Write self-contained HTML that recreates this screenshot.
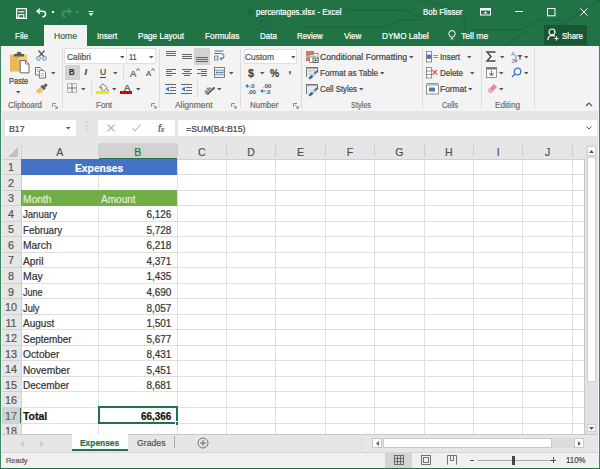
<!DOCTYPE html>
<html><head><meta charset="utf-8"><style>
html,body{margin:0;padding:0;}
body{width:600px;height:469px;position:relative;overflow:hidden;background:#f3f3f3;font-family:"Liberation Sans",sans-serif;}
.t{position:absolute;white-space:nowrap;line-height:1;transform-origin:0 0;-webkit-text-stroke:0.2px currentColor;}
.r{position:absolute;}
svg.r{overflow:visible;}
</style></head><body><div style="position:absolute;left:0;top:0;width:600px;height:469px;overflow:hidden">
<div class="r" style="left:0px;top:0px;width:600.00px;height:46.00px;background:#217346;"></div>
<svg class="r" style="left:0px;top:0px" width="600" height="46" viewBox="0 0 600 46"><g fill="none" stroke="#1c6a3f" stroke-width="1.5">
<circle cx="250.5" cy="11.7" r="2.2" fill="#1c6a3f"/>
<circle cx="263" cy="24" r="8"/>
<circle cx="263" cy="24" r="3.5"/>
<path d="M345 10 H400 Q410 10 416 16 H430"/>
<path d="M300 27 H380 Q392 27 398 20 H420"/>
<path d="M418 0 Q468 8 466 28 Q464 40 452 46"/>
<path d="M470 30 H520 L540 20 H560"/>
<path d="M505 46 L527 30"/>
<path d="M560 26 L600 0"/>
</g></svg>
<svg class="r" style="left:15.5px;top:7.5px" width="11" height="11" viewBox="0 0 11 11"><g fill="none" stroke="#fff"><rect x="0.65" y="0.65" width="9.7" height="9.7" stroke-width="1.3"/><path d="M2.3 3.8 h6" stroke-width="1.2"/><rect x="2.8" y="6.6" width="5" height="3.4" stroke-width="1.1"/></g></svg>
<svg class="r" style="left:35.5px;top:8px" width="11" height="10" viewBox="0 0 11 10"><g fill="none" stroke="#fff" stroke-width="1.5"><path d="M4 0.8 L1.1 3.3 L4 5.8"/><path d="M1.4 3.3 H6 Q9.6 3.3 9.6 6 Q9.6 8.6 6.3 8.9"/></g></svg>
<div class="r" style="left:51.8px;top:11px;width:1.80px;height:1.80px;background:#fff;"></div>
<svg class="r" style="left:61px;top:8px" width="11" height="10" viewBox="0 0 11 10"><g fill="none" stroke="#4f8f69" stroke-width="1.5"><path d="M7 0.8 L9.9 3.3 L7 5.8"/><path d="M9.6 3.3 H5 Q1.4 3.3 1.4 6 Q1.4 8.6 4.7 8.9"/></g></svg>
<div class="r" style="left:76px;top:11px;width:1.80px;height:1.80px;background:#4f8f69;"></div>
<svg class="r" style="left:88px;top:10.5px" width="6" height="6" viewBox="0 0 6 6"><rect x="0.5" y="0" width="5" height="1" fill="#fff"/><path d="M0.5 2.2 h5 l-2.5 2.8z" fill="#fff"/></svg>
<div class="t" style="left:256.40px;top:8.00px;font-size:8.5px;color:#fff;transform:scaleX(0.9292);">percentages.xlsx - Excel</div>
<div class="t" style="left:422.70px;top:8.00px;font-size:8.5px;color:#fff;transform:scaleX(0.9292);">Bob Flisser</div>
<svg class="r" style="left:479.8px;top:8px" width="11" height="8" viewBox="0 0 11 8"><g fill="none" stroke="#fff" stroke-width="1"><rect x="0.5" y="0.5" width="10" height="6.5"/></g><rect x="0.5" y="0.5" width="10" height="2" fill="#fff"/><path d="M3.5 5.5 L5.5 3.3 L7.5 5.5z" fill="#fff"/></svg>
<div class="r" style="left:514.6px;top:11px;width:8.70px;height:1.00px;background:#fff;"></div>
<svg class="r" style="left:547px;top:7.8px" width="9" height="9" viewBox="0 0 9 9"><rect x="0.5" y="0.5" width="7.5" height="7.3" fill="none" stroke="#fff" stroke-width="1"/></svg>
<svg class="r" style="left:579.8px;top:8px" width="8" height="8" viewBox="0 0 8 8"><path d="M0.3 0.3 L7.5 7.5 M7.5 0.3 L0.3 7.5" stroke="#fff" stroke-width="1"/></svg>
<div class="r" style="left:44px;top:25px;width:43.00px;height:21.00px;background:#f3f3f3;"></div>
<div class="t" style="left:15.00px;top:32.00px;font-size:8.5px;color:#fff;transform:scaleX(0.9492);">File</div>
<div class="t" style="left:54.00px;top:32.00px;font-size:8.5px;color:#3a6b50;transform:scaleX(1.0144);">Home</div>
<div class="t" style="left:97.30px;top:32.00px;font-size:8.5px;color:#fff;transform:scaleX(0.9550);">Insert</div>
<div class="t" style="left:138.00px;top:32.00px;font-size:8.5px;color:#fff;transform:scaleX(0.9638);">Page Layout</div>
<div class="t" style="left:204.90px;top:32.00px;font-size:8.5px;color:#fff;transform:scaleX(0.9712);">Formulas</div>
<div class="t" style="left:259.90px;top:32.00px;font-size:8.5px;color:#fff;transform:scaleX(0.9357);">Data</div>
<div class="t" style="left:297.20px;top:32.00px;font-size:8.5px;color:#fff;transform:scaleX(0.9222);">Review</div>
<div class="t" style="left:343.70px;top:32.00px;font-size:8.5px;color:#fff;transform:scaleX(0.9469);">View</div>
<div class="t" style="left:381.50px;top:32.00px;font-size:8.5px;color:#fff;transform:scaleX(0.9618);">DYMO Label</div>
<svg class="r" style="left:448px;top:30px" width="8" height="11" viewBox="0 0 8 11"><g fill="none" stroke="#fff" stroke-width="1"><path d="M2.5 7 Q0.5 5 0.8 3.2 Q1.2 0.6 4 0.6 Q6.8 0.6 7.2 3.2 Q7.5 5 5.5 7 Z"/><path d="M2.6 8.8 h2.8"/></g></svg>
<div class="t" style="left:461.00px;top:32.00px;font-size:8.5px;color:#fff;transform:scaleX(1.0140);">Tell me</div>
<div class="r" style="left:544px;top:25px;width:43.30px;height:19.50px;background:#185634;"></div>
<svg class="r" style="left:547px;top:28px" width="12" height="13" viewBox="0 0 12 13"><g fill="none" stroke="#fff" stroke-width="1.2"><circle cx="5" cy="4" r="3"/><path d="M0.8 12 Q1.2 7.5 5 7.3 Q7 7.3 8 8.3"/><path d="M9.5 8.5 v4 M7.5 10.5 h4"/></g></svg>
<div class="t" style="left:561.70px;top:32.00px;font-size:8.5px;color:#fff;transform:scaleX(0.9259);">Share</div>
<div class="r" style="left:1.5px;top:46px;width:596.50px;height:64.50px;background:#f3f3f3;"></div>
<div class="r" style="left:0px;top:46px;width:1.20px;height:423.00px;background:#3d8560;"></div>
<div class="r" style="left:598.6px;top:46px;width:1.40px;height:423.00px;background:#3d8560;"></div>
<div class="r" style="left:62px;top:49px;width:1.00px;height:59.00px;background:#dcdcdc;"></div>
<div class="r" style="left:159.2px;top:49px;width:1.00px;height:59.00px;background:#dcdcdc;"></div>
<div class="r" style="left:240.4px;top:49px;width:1.00px;height:59.00px;background:#dcdcdc;"></div>
<div class="r" style="left:301.4px;top:49px;width:1.00px;height:59.00px;background:#dcdcdc;"></div>
<div class="r" style="left:422px;top:49px;width:1.00px;height:59.00px;background:#dcdcdc;"></div>
<div class="r" style="left:480.6px;top:49px;width:1.00px;height:59.00px;background:#dcdcdc;"></div>
<div class="r" style="left:533.8px;top:49px;width:1.00px;height:59.00px;background:#dcdcdc;"></div>
<div class="t" style="left:7.50px;top:101.37px;font-size:8.3px;color:#6e6e6e;transform:scaleX(0.9571);">Clipboard</div>
<div class="t" style="left:96.20px;top:101.37px;font-size:8.3px;color:#6e6e6e;transform:scaleX(0.9695);">Font</div>
<div class="t" style="left:175.20px;top:101.37px;font-size:8.3px;color:#6e6e6e;transform:scaleX(1.0161);">Alignment</div>
<div class="t" style="left:250.20px;top:101.37px;font-size:8.3px;color:#6e6e6e;transform:scaleX(0.9621);">Number</div>
<div class="t" style="left:351.00px;top:101.37px;font-size:8.3px;color:#6e6e6e;transform:scaleX(0.8849);">Styles</div>
<div class="t" style="left:442.00px;top:101.37px;font-size:8.3px;color:#6e6e6e;transform:scaleX(0.8673);">Cells</div>
<div class="t" style="left:495.00px;top:101.37px;font-size:8.3px;color:#6e6e6e;transform:scaleX(0.9851);">Editing</div>
<svg class="r" style="left:52px;top:103px" width="6" height="6" viewBox="0 0 6 6"><g fill="none" stroke="#777" stroke-width="0.8"><path d="M0.5 4 V0.5 H4"/><path d="M2 2 L5.2 5.2"/></g><path d="M5.6 2.8 V5.6 H2.8z" fill="#777"/></svg>
<svg class="r" style="left:151px;top:103px" width="6" height="6" viewBox="0 0 6 6"><g fill="none" stroke="#777" stroke-width="0.8"><path d="M0.5 4 V0.5 H4"/><path d="M2 2 L5.2 5.2"/></g><path d="M5.6 2.8 V5.6 H2.8z" fill="#777"/></svg>
<svg class="r" style="left:231.2px;top:103px" width="6" height="6" viewBox="0 0 6 6"><g fill="none" stroke="#777" stroke-width="0.8"><path d="M0.5 4 V0.5 H4"/><path d="M2 2 L5.2 5.2"/></g><path d="M5.6 2.8 V5.6 H2.8z" fill="#777"/></svg>
<svg class="r" style="left:292.6px;top:103px" width="6" height="6" viewBox="0 0 6 6"><g fill="none" stroke="#777" stroke-width="0.8"><path d="M0.5 4 V0.5 H4"/><path d="M2 2 L5.2 5.2"/></g><path d="M5.6 2.8 V5.6 H2.8z" fill="#777"/></svg>
<svg class="r" style="left:585px;top:101px" width="8" height="6" viewBox="0 0 8 6"><path d="M1 5 L4 2 L7 5" fill="none" stroke="#555" stroke-width="1.2"/></svg>
<svg class="r" style="left:9px;top:51px" width="22" height="23" viewBox="0 0 22 23"><rect x="1" y="3.5" width="17" height="17" fill="#eab956"/>
<rect x="10" y="3.5" width="8" height="6" fill="#f3cf80"/>
<path d="M5 5.5 v-2.5 h2.5 a2.5 2.2 0 0 1 5 0 h2.5 v2.5 z" fill="#5a5a5a"/>
<path d="M11.2 9.5 h5.3 l3.5 3.5 v8.8 h-8.8z" fill="#fff" stroke="#6a6a6a" stroke-width="1"/>
<path d="M16.5 9.5 v3.5 h3.5" fill="none" stroke="#6a6a6a" stroke-width="0.8"/></svg>
<div class="t" style="left:8.80px;top:76.80px;font-size:8.5px;color:#444;transform:scaleX(0.8834);">Paste</div>
<svg class="r" style="left:16px;top:90.8px" width="5" height="3" viewBox="0 0 5 3"><path d="M0 0 h4.5 l-2.25 2.5z" fill="#555"/></svg>
<svg class="r" style="left:35.5px;top:50px" width="11" height="11" viewBox="0 0 11 11"><g fill="none" stroke="#555" stroke-width="1.2"><path d="M2.5 0.5 L7.8 6.5 M8.5 0.5 L3.2 6.5"/></g><g fill="#dbe8f6" stroke="#5b8fc9" stroke-width="1"><circle cx="2.5" cy="8.3" r="1.9"/><circle cx="8.5" cy="8.3" r="1.9"/></g></svg>
<svg class="r" style="left:35px;top:66.5px" width="11" height="11.5" viewBox="0 0 11 11.5"><g fill="#fff" stroke="#666" stroke-width="0.9"><path d="M0.5 0.5 h4.5 l1.8 1.8 v5.7 h-6.3z"/><path d="M4.3 3.5 h4.3 l1.9 1.9 v5.6 h-6.2z"/></g><path d="M1.8 2.5 h2 M1.8 4.5 h2 M5.6 6.5 h3.3 M5.6 8.5 h3.3" stroke="#999" stroke-width="0.7"/></svg>
<svg class="r" style="left:50.5px;top:71.8px" width="5" height="3" viewBox="0 0 5 3"><path d="M0 0 h4.5 l-2.25 2.5z" fill="#555"/></svg>
<svg class="r" style="left:35.5px;top:83px" width="12" height="10.5" viewBox="0 0 12 10.5"><path d="M0.5 7.5 L4.5 3.5 L8 7 L4 10.5 Q2 10.5 0.5 9z" fill="#edc36a"/><path d="M4.5 3.5 L6.5 1.8 L9.8 5.2 L8 7z" fill="#555"/><path d="M7.5 2.5 L9.8 0.3 L11.6 2.2 L9.3 4.5z" fill="#555"/></svg>
<div class="r" style="left:64.3px;top:48.3px;width:92.20px;height:15.70px;background:#fff;box-shadow: inset 0 0 0 1px #e0e0e0;"></div>
<div class="r" style="left:126px;top:48.3px;width:1.00px;height:15.70px;background:#e0e0e0;"></div>
<div class="t" style="left:66.70px;top:53.10px;font-size:8.5px;color:#505050;transform:scaleX(0.9963);">Calibri</div>
<svg class="r" style="left:119.5px;top:55.5px" width="5" height="3" viewBox="0 0 5 3"><path d="M0 0 h4.5 l-2.25 2.5z" fill="#555"/></svg>
<div class="t" style="left:128.80px;top:53.10px;font-size:8.5px;color:#505050;transform:scaleX(0.8841);">11</div>
<svg class="r" style="left:149.2px;top:55.5px" width="5" height="3" viewBox="0 0 5 3"><path d="M0 0 h4.5 l-2.25 2.5z" fill="#555"/></svg>
<div class="r" style="left:64.5px;top:64.5px;width:15.00px;height:15.80px;background:#d2d2d2;"></div>
<div class="t" style="left:69.00px;top:68.40px;font-size:8.5px;color:#333;font-weight:bold;transform:scaleX(0.9123);">B</div>
<div class="t" style="left:84.50px;top:67.98px;font-size:9px;color:#444;font-weight:bold;font-style:italic;font-family:"Liberation Serif",serif;">I</div>
<div class="t" style="left:99.60px;top:68.00px;font-size:8.5px;color:#444;transform:scaleX(1.0100);">U</div>
<div class="r" style="left:99.6px;top:76.6px;width:6.40px;height:0.90px;background:#444;"></div>
<svg class="r" style="left:113px;top:72px" width="5" height="3" viewBox="0 0 5 3"><path d="M0 0 h4.5 l-2.25 2.5z" fill="#555"/></svg>
<div class="r" style="left:122.6px;top:65px;width:0.80px;height:15.00px;background:#dcdcdc;"></div>
<div class="t" style="left:129.60px;top:68.56px;font-size:9.5px;color:#555;transform:scaleX(1.0100);">A</div>
<svg class="r" style="left:135.8px;top:67.8px" width="4" height="3" viewBox="0 0 4 3"><path d="M0.3 2.7 L2 0.6 L3.7 2.7" fill="none" stroke="#555" stroke-width="0.9"/></svg>
<div class="t" style="left:146.40px;top:69.83px;font-size:8px;color:#555;transform:scaleX(0.9745);">A</div>
<svg class="r" style="left:151.2px;top:67.6px" width="4" height="3" viewBox="0 0 4 3"><path d="M0.3 2.7 L2 0.6 L3.7 2.7" fill="none" stroke="#555" stroke-width="0.9"/></svg>
<svg class="r" style="left:66.5px;top:83.2px" width="10.5" height="10" viewBox="0 0 10.5 10"><g fill="none" stroke="#8a8a8a" stroke-width="0.9" stroke-dasharray="1.2 0.6"><rect x="0.5" y="0.5" width="9" height="9"/></g><path d="M5 0.5 v9 M0.5 5 h9" stroke="#777" stroke-width="1"/></svg>
<svg class="r" style="left:81.3px;top:87.5px" width="5" height="3" viewBox="0 0 5 3"><path d="M0 0 h4.5 l-2.25 2.5z" fill="#555"/></svg>
<div class="r" style="left:91.1px;top:80.5px;width:0.80px;height:14.50px;background:#dcdcdc;"></div>
<svg class="r" style="left:97px;top:82.5px" width="13" height="9" viewBox="0 0 13 9"><path d="M2.5 4 L6 0.8 L10.2 4.8 L6.4 8.2 Z" fill="#fff" stroke="#666" stroke-width="0.9"/><path d="M3 3.5 L6 5.6" stroke="#666" stroke-width="0.8"/><path d="M10.5 5.5 Q12.5 7.5 11.2 8.5 Q10 8.5 10.2 7z" fill="#4a87c8"/></svg>
<div class="r" style="left:96.3px;top:91px;width:13.10px;height:3.00px;background:#f0e800;"></div>
<svg class="r" style="left:112px;top:87.5px" width="5" height="3" viewBox="0 0 5 3"><path d="M0 0 h4.5 l-2.25 2.5z" fill="#555"/></svg>
<div class="t" style="left:123.60px;top:83.26px;font-size:9.5px;color:#444;transform:scaleX(0.9942);">A</div>
<div class="r" style="left:120.2px;top:91.3px;width:12.10px;height:2.70px;background:#e00000;"></div>
<svg class="r" style="left:136px;top:87.5px" width="5" height="3" viewBox="0 0 5 3"><path d="M0 0 h4.5 l-2.25 2.5z" fill="#555"/></svg>
<div class="r" style="left:166px;top:51px;width:10.00px;height:1.00px;background:#666;"></div>
<div class="r" style="left:166px;top:53px;width:10.00px;height:1.00px;background:#666;"></div>
<div class="r" style="left:166px;top:55px;width:10.00px;height:1.00px;background:#666;"></div>
<div class="r" style="left:182px;top:54px;width:10.00px;height:1.00px;background:#666;"></div>
<div class="r" style="left:182px;top:56px;width:10.00px;height:1.00px;background:#666;"></div>
<div class="r" style="left:182px;top:58px;width:10.00px;height:1.00px;background:#666;"></div>
<div class="r" style="left:194.3px;top:48.2px;width:15.40px;height:16.50px;background:#d2d2d2;"></div>
<div class="r" style="left:196px;top:57px;width:12.00px;height:1.00px;background:#666;"></div>
<div class="r" style="left:196px;top:59px;width:12.00px;height:1.00px;background:#666;"></div>
<div class="r" style="left:196px;top:61px;width:12.00px;height:1.00px;background:#666;"></div>
<svg class="r" style="left:213.5px;top:50px" width="11" height="11" viewBox="0 0 11 11"><path d="M0.5 1 h9 M0.5 3.5 h6" stroke="#6a6a6a" stroke-width="1"/><path d="M6.5 3.5 q3.5 0 3.5 2.8 q0 2.5 -3 2.5" fill="none" stroke="#3f7fc4" stroke-width="1.1"/><path d="M5.5 8.8 l2.2 -2 v4z" fill="#3f7fc4"/><rect x="0.5" y="6" width="3.5" height="4" fill="#d8e6f5" stroke="#777" stroke-width="0.8"/></svg>
<div class="r" style="left:166px;top:69px;width:10.00px;height:1.00px;background:#666;"></div>
<div class="r" style="left:182.0px;top:69px;width:10.00px;height:1.00px;background:#666;"></div>
<div class="r" style="left:197px;top:69px;width:10.00px;height:1.00px;background:#666;"></div>
<div class="r" style="left:166px;top:71px;width:6.00px;height:1.00px;background:#666;"></div>
<div class="r" style="left:184.0px;top:71px;width:6.00px;height:1.00px;background:#666;"></div>
<div class="r" style="left:201px;top:71px;width:6.00px;height:1.00px;background:#666;"></div>
<div class="r" style="left:166px;top:73px;width:10.00px;height:1.00px;background:#666;"></div>
<div class="r" style="left:182.0px;top:73px;width:10.00px;height:1.00px;background:#666;"></div>
<div class="r" style="left:197px;top:73px;width:10.00px;height:1.00px;background:#666;"></div>
<div class="r" style="left:166px;top:75px;width:6.00px;height:1.00px;background:#666;"></div>
<div class="r" style="left:184.0px;top:75px;width:6.00px;height:1.00px;background:#666;"></div>
<div class="r" style="left:201px;top:75px;width:6.00px;height:1.00px;background:#666;"></div>
<svg class="r" style="left:213.8px;top:67px" width="11" height="11" viewBox="0 0 11 11"><g fill="none" stroke="#777" stroke-width="0.9"><rect x="0.5" y="0.5" width="10" height="10"/><path d="M0.5 3.3 h10 M0.5 7.7 h10"/></g><rect x="1" y="3.8" width="9" height="3.4" fill="#dce9f5"/><path d="M2 5.5 h7" stroke="#3f7fc4" stroke-width="0.9"/><path d="M1.5 5.5 l1.5 -1.3 v2.6z M9.5 5.5 l-1.5 -1.3 v2.6z" fill="#3f7fc4"/></svg>
<svg class="r" style="left:229.2px;top:71.5px" width="5" height="3" viewBox="0 0 5 3"><path d="M0 0 h4.5 l-2.25 2.5z" fill="#555"/></svg>
<svg class="r" style="left:164.7px;top:83.5px" width="12" height="10" viewBox="0 0 12 10"><g fill="#666"><rect x="0" y="0" width="11" height="1"/><rect x="5" y="3" width="6" height="1"/><rect x="5" y="6" width="6" height="1"/><rect x="0" y="9" width="11" height="1"/></g><path d="M0.5 5 L4 2.5 V7.5z" fill="#3a7cc7"/></svg>
<svg class="r" style="left:180.5px;top:83.5px" width="12" height="10" viewBox="0 0 12 10"><g fill="#666"><rect x="0" y="0" width="11" height="1"/><rect x="5" y="3" width="6" height="1"/><rect x="5" y="6" width="6" height="1"/><rect x="0" y="9" width="11" height="1"/></g><path d="M0.5 5 L4 2.5 V7.5z" fill="#3a7cc7"/></svg>
<div class="r" style="left:197px;top:81px;width:0.80px;height:16.00px;background:#dcdcdc;"></div>
<svg class="r" style="left:202.5px;top:83.5px" width="12" height="11" viewBox="0 0 12 11"><g transform="rotate(-40 5 6)"><text x="0.5" y="8.5" font-size="7" font-weight="bold" font-family="Liberation Sans" fill="#555">ab</text></g><path d="M4.5 10.5 L11.5 3.5" stroke="#555" stroke-width="1.2"/><path d="M11.8 3.2 l-3 0.6 l2.4 2.4z" fill="#555"/></svg>
<svg class="r" style="left:216.7px;top:88px" width="5" height="3" viewBox="0 0 5 3"><path d="M0 0 h4.5 l-2.25 2.5z" fill="#555"/></svg>
<div class="r" style="left:243.7px;top:48.5px;width:53.30px;height:15.60px;background:#fff;box-shadow: inset 0 0 0 1px #e0e0e0;"></div>
<div class="t" style="left:245.20px;top:53.30px;font-size:8.5px;color:#505050;transform:scaleX(0.9869);">Custom</div>
<svg class="r" style="left:290.5px;top:55.5px" width="5" height="3" viewBox="0 0 5 3"><path d="M0 0 h4.5 l-2.25 2.5z" fill="#555"/></svg>
<div class="t" style="left:248.00px;top:68.31px;font-size:10.5px;color:#444;font-weight:bold;transform:scaleX(1.0276);">$</div>
<svg class="r" style="left:260.2px;top:72px" width="5" height="3" viewBox="0 0 5 3"><path d="M0 0 h4.5 l-2.25 2.5z" fill="#555"/></svg>
<div class="t" style="left:270.40px;top:68.73px;font-size:10px;color:#444;font-weight:bold;transform:scaleX(1.0346);">%</div>
<div class="t" style="left:288.60px;top:64.53px;font-size:10px;color:#444;font-weight:bold;">,</div>
<svg class="r" style="left:244.5px;top:83px" width="12" height="11" viewBox="0 0 12 11"><text x="4.5" y="5" font-size="6" font-weight="bold" font-family="Liberation Sans" fill="#555">.0</text><text x="2.5" y="10.5" font-size="6" font-weight="bold" font-family="Liberation Sans" fill="#555">.00</text><path d="M0 3 L3 1 V5z" fill="#3a7cc7"/><rect x="2" y="2.6" width="3" height="0.9" fill="#3a7cc7"/></svg>
<svg class="r" style="left:260px;top:83px" width="12" height="11" viewBox="0 0 12 11"><text x="3" y="5" font-size="6" font-weight="bold" font-family="Liberation Sans" fill="#555">.00</text><text x="5.5" y="10.5" font-size="6" font-weight="bold" font-family="Liberation Sans" fill="#555">.0</text><path d="M0 8 L3 6 V10z" fill="#3a7cc7"/><rect x="2" y="7.6" width="4" height="0.9" fill="#3a7cc7"/></svg>
<svg class="r" style="left:306px;top:51px" width="13" height="12" viewBox="0 0 13 12"><rect x="3.5" y="2.5" width="8.5" height="9" fill="#fff" stroke="#8a8a8a" stroke-width="0.9"/><rect x="0" y="0" width="8" height="4" fill="#cf7a5a"/><rect x="0" y="0" width="4" height="10" fill="#cf7a5a"/><rect x="0" y="4.5" width="10" height="2" fill="#aab6c6"/><rect x="7" y="7" width="5" height="4.5" fill="#fff" stroke="#555" stroke-width="0.9"/><rect x="8.5" y="8.5" width="2" height="1.8" fill="#333"/></svg>
<svg class="r" style="left:306px;top:67px" width="13" height="12" viewBox="0 0 13 12"><path d="M0.5 10 V0.5 H11.5 V6" fill="none" stroke="#777" stroke-width="1"/><rect x="0.5" y="0" width="11" height="1.6" fill="#777"/><path d="M0.5 4 h11 M0.5 7 h8 M4.2 1 v9 M8 1 v6" stroke="#b5b5b5" stroke-width="0.7"/><path d="M4 11 L11.8 4" stroke="#b9d3ee" stroke-width="3.2"/><path d="M3.2 11.8 L6.5 8.8" stroke="#2f5f9a" stroke-width="2.2"/><path d="M8.5 6.5 L12 3.5" stroke="#555" stroke-width="1.5"/></svg>
<svg class="r" style="left:306px;top:83.5px" width="13" height="12" viewBox="0 0 13 12"><path d="M0.5 10 V0.5 H11.5 V6" fill="none" stroke="#777" stroke-width="1"/><rect x="0.5" y="0" width="11" height="1.6" fill="#777"/><rect x="1.5" y="2" width="9.5" height="7" fill="#e6e9ee"/><path d="M4 11 L11.8 4" stroke="#b9d3ee" stroke-width="3.2"/><path d="M3.2 11.8 L6.5 8.8" stroke="#2f5f9a" stroke-width="2.2"/><path d="M8.5 6.5 L12 3.5" stroke="#555" stroke-width="1.5"/></svg>
<div class="t" style="left:320.00px;top:53.30px;font-size:8.5px;color:#444;transform:scaleX(1.0174);">Conditional Formatting</div>
<svg class="r" style="left:408.6px;top:56px" width="5" height="3" viewBox="0 0 5 3"><path d="M0 0 h4.5 l-2.25 2.5z" fill="#555"/></svg>
<div class="t" style="left:320.00px;top:69.30px;font-size:8.5px;color:#444;transform:scaleX(0.9542);">Format as Table</div>
<svg class="r" style="left:380px;top:72px" width="5" height="3" viewBox="0 0 5 3"><path d="M0 0 h4.5 l-2.25 2.5z" fill="#555"/></svg>
<div class="t" style="left:320.00px;top:85.30px;font-size:8.5px;color:#444;transform:scaleX(0.9215);">Cell Styles</div>
<svg class="r" style="left:358.6px;top:88px" width="5" height="3" viewBox="0 0 5 3"><path d="M0 0 h4.5 l-2.25 2.5z" fill="#555"/></svg>
<svg class="r" style="left:426px;top:51px" width="13" height="12" viewBox="0 0 13 12"><g fill="#fff" stroke="#777" stroke-width="0.8"><rect x="0.5" y="0.5" width="5" height="10.5"/><path d="M0.5 4 h5 M0.5 7.5 h5"/></g><rect x="1" y="4" width="4.5" height="3.5" fill="#3a7cc7"/><path d="M7 4.5 h5 M7 6.5 h5" stroke="#777" stroke-width="0.8"/></svg>
<svg class="r" style="left:426px;top:67px" width="13" height="12" viewBox="0 0 13 12"><g fill="#fff" stroke="#777" stroke-width="0.8"><rect x="0.5" y="0.5" width="5" height="10.5"/><path d="M0.5 4 h5 M0.5 7.5 h5"/></g><path d="M6.5 3 L11 7.5 M11 3 L6.5 7.5" stroke="#e05050" stroke-width="1.1"/></svg>
<svg class="r" style="left:426px;top:83px" width="13" height="12" viewBox="0 0 13 12"><rect x="0.5" y="2" width="12" height="9" fill="#fff" stroke="#777" stroke-width="0.8"/><path d="M0.5 0.5 h12" stroke="#777" stroke-width="0.8"/><rect x="3" y="4.5" width="6" height="4" fill="#3a7cc7"/></svg>
<div class="t" style="left:440.00px;top:53.30px;font-size:8.5px;color:#444;transform:scaleX(0.9409);">Insert</div>
<svg class="r" style="left:467px;top:56px" width="5" height="3" viewBox="0 0 5 3"><path d="M0 0 h4.5 l-2.25 2.5z" fill="#555"/></svg>
<div class="t" style="left:440.00px;top:69.30px;font-size:8.5px;color:#444;transform:scaleX(0.9361);">Delete</div>
<svg class="r" style="left:470px;top:72px" width="5" height="3" viewBox="0 0 5 3"><path d="M0 0 h4.5 l-2.25 2.5z" fill="#555"/></svg>
<div class="t" style="left:440.00px;top:85.30px;font-size:8.5px;color:#444;transform:scaleX(0.9882);">Format</div>
<svg class="r" style="left:468px;top:88px" width="5" height="3" viewBox="0 0 5 3"><path d="M0 0 h4.5 l-2.25 2.5z" fill="#555"/></svg>
<svg class="r" style="left:486px;top:51px" width="10" height="11" viewBox="0 0 10 11"><path d="M9.5 1 H1 L5 5.5 L1 10 H9.5" fill="none" stroke="#444" stroke-width="1.4"/></svg>
<svg class="r" style="left:500.4px;top:56px" width="5" height="3" viewBox="0 0 5 3"><path d="M0 0 h4.5 l-2.25 2.5z" fill="#555"/></svg>
<svg class="r" style="left:510.5px;top:50px" width="12" height="13" viewBox="0 0 12 13"><text x="0" y="5.5" font-size="6" font-family="Liberation Sans" fill="#3a7cc7">A</text><text x="0.5" y="12.5" font-size="6" font-family="Liberation Sans" fill="#9b59b6">Z</text><path d="M5 5 L5 12 M3.5 10 L5 12 L6.5 10" stroke="#555" stroke-width="0.7" fill="none"/><path d="M6.5 5 h5 l-2 2.5 v2.5 h-1 v-2.5z" fill="#555"/></svg>
<svg class="r" style="left:524px;top:56px" width="5" height="3" viewBox="0 0 5 3"><path d="M0 0 h4.5 l-2.25 2.5z" fill="#555"/></svg>
<svg class="r" style="left:486px;top:67px" width="11" height="11" viewBox="0 0 11 11"><rect x="0.5" y="0.5" width="10" height="10" fill="#fff" stroke="#777" stroke-width="0.8"/><rect x="0.5" y="0.5" width="10" height="2" fill="#777"/><path d="M5.5 3.5 v5 M3.3 6.3 L5.5 8.5 L7.7 6.3" stroke="#3a7cc7" stroke-width="1.1" fill="none"/></svg>
<svg class="r" style="left:499.4px;top:72px" width="5" height="3" viewBox="0 0 5 3"><path d="M0 0 h4.5 l-2.25 2.5z" fill="#555"/></svg>
<svg class="r" style="left:510.5px;top:67px" width="11" height="11" viewBox="0 0 11 11"><circle cx="6.5" cy="4.5" r="3.3" fill="none" stroke="#3a7cc7" stroke-width="1.3"/><path d="M4 7 L1 10" stroke="#3a7cc7" stroke-width="1.6"/></svg>
<svg class="r" style="left:524px;top:72px" width="5" height="3" viewBox="0 0 5 3"><path d="M0 0 h4.5 l-2.25 2.5z" fill="#555"/></svg>
<svg class="r" style="left:486.5px;top:83px" width="11" height="11" viewBox="0 0 11 11"><path d="M0.5 7.5 L7 1 L10 4 L3.5 10.5 Z" fill="#e8829e"/><path d="M0.5 7.5 L3 5 L6 8 L3.5 10.5z" fill="#f0a8bc"/></svg>
<svg class="r" style="left:499.4px;top:88px" width="5" height="3" viewBox="0 0 5 3"><path d="M0 0 h4.5 l-2.25 2.5z" fill="#555"/></svg>
<div class="r" style="left:1.5px;top:110.5px;width:596.50px;height:32.50px;background:#e6e6e6;"></div>
<div class="r" style="left:5px;top:120px;width:70.50px;height:16.00px;background:#fff;"></div>
<div class="t" style="left:9.00px;top:124.80px;font-size:8.5px;color:#444;transform:scaleX(1.0249);">B17</div>
<svg class="r" style="left:66px;top:126.5px" width="5" height="3" viewBox="0 0 5 3"><path d="M0 0 h4.5 l-2.25 2.5z" fill="#555"/></svg>
<svg class="r" style="left:85px;top:121px" width="4" height="11" viewBox="0 0 4 11"><g fill="#aaa"><rect x="1" y="1" width="1.2" height="1.2"/><rect x="1" y="4.5" width="1.2" height="1.2"/><rect x="1" y="8" width="1.2" height="1.2"/></g></svg>
<div class="r" style="left:98px;top:120px;width:77.00px;height:16.00px;background:#fff;"></div>
<svg class="r" style="left:107px;top:124px" width="8" height="8" viewBox="0 0 8 8"><path d="M0.5 0.5 L7.5 7.5 M7.5 0.5 L0.5 7.5" stroke="#b5b5b5" stroke-width="1.1"/></svg>
<svg class="r" style="left:132px;top:124px" width="9" height="8" viewBox="0 0 9 8"><path d="M0.5 4 L3 7 L8.5 0.5" stroke="#b5b5b5" stroke-width="1.1" fill="none"/></svg>
<div class="t" style="left:158.00px;top:123.53px;font-size:10px;color:#555;font-family:"Liberation Serif",serif;"><i>f</i><span style="font-size:7px"><i>x</i></span></div>
<div class="r" style="left:178px;top:120px;width:419.00px;height:16.00px;background:#fff;"></div>
<div class="t" style="left:186.00px;top:124.80px;font-size:8.5px;color:#444;transform:scaleX(1.0367);">=SUM(B4:B15)</div>
<svg class="r" style="left:586px;top:126px" width="6" height="4" viewBox="0 0 6 4"><path d="M0.5 0.5 L3 3 L5.5 0.5" fill="none" stroke="#555" stroke-width="1"/></svg>
<div class="r" style="left:1.5px;top:143.4px;width:583.50px;height:15.60px;background:#e6e6e6;"></div>
<div class="r" style="left:1.5px;top:159.0px;width:19.50px;height:274.60px;background:#e6e6e6;"></div>
<div class="r" style="left:21px;top:159.0px;width:564.00px;height:274.60px;background:#fff;"></div>
<div class="r" style="left:98.7px;top:143.4px;width:78.30px;height:15.60px;background:#d2d2d2;"></div>
<div class="r" style="left:98.7px;top:157.5px;width:78.30px;height:1.50px;background:#217346;"></div>
<div class="r" style="left:1.5px;top:407.48px;width:19.50px;height:15.53px;background:#d2d2d2;"></div>
<div class="r" style="left:19.5px;top:407.48px;width:1.50px;height:15.53px;background:#217346;"></div>
<div class="r" style="left:21px;top:174.03px;width:564.00px;height:1.00px;background:#dedfe0;"></div>
<div class="r" style="left:1.5px;top:174.03px;width:19.50px;height:1.00px;background:#d0d0d0;"></div>
<div class="r" style="left:21px;top:189.56px;width:564.00px;height:1.00px;background:#dedfe0;"></div>
<div class="r" style="left:1.5px;top:189.56px;width:19.50px;height:1.00px;background:#d0d0d0;"></div>
<div class="r" style="left:21px;top:205.09px;width:564.00px;height:1.00px;background:#dedfe0;"></div>
<div class="r" style="left:1.5px;top:205.09px;width:19.50px;height:1.00px;background:#d0d0d0;"></div>
<div class="r" style="left:21px;top:220.62px;width:564.00px;height:1.00px;background:#dedfe0;"></div>
<div class="r" style="left:1.5px;top:220.62px;width:19.50px;height:1.00px;background:#d0d0d0;"></div>
<div class="r" style="left:21px;top:236.14999999999998px;width:564.00px;height:1.00px;background:#dedfe0;"></div>
<div class="r" style="left:1.5px;top:236.14999999999998px;width:19.50px;height:1.00px;background:#d0d0d0;"></div>
<div class="r" style="left:21px;top:251.68px;width:564.00px;height:1.00px;background:#dedfe0;"></div>
<div class="r" style="left:1.5px;top:251.68px;width:19.50px;height:1.00px;background:#d0d0d0;"></div>
<div class="r" style="left:21px;top:267.21px;width:564.00px;height:1.00px;background:#dedfe0;"></div>
<div class="r" style="left:1.5px;top:267.21px;width:19.50px;height:1.00px;background:#d0d0d0;"></div>
<div class="r" style="left:21px;top:282.74px;width:564.00px;height:1.00px;background:#dedfe0;"></div>
<div class="r" style="left:1.5px;top:282.74px;width:19.50px;height:1.00px;background:#d0d0d0;"></div>
<div class="r" style="left:21px;top:298.27px;width:564.00px;height:1.00px;background:#dedfe0;"></div>
<div class="r" style="left:1.5px;top:298.27px;width:19.50px;height:1.00px;background:#d0d0d0;"></div>
<div class="r" style="left:21px;top:313.79999999999995px;width:564.00px;height:1.00px;background:#dedfe0;"></div>
<div class="r" style="left:1.5px;top:313.79999999999995px;width:19.50px;height:1.00px;background:#d0d0d0;"></div>
<div class="r" style="left:21px;top:329.33px;width:564.00px;height:1.00px;background:#dedfe0;"></div>
<div class="r" style="left:1.5px;top:329.33px;width:19.50px;height:1.00px;background:#d0d0d0;"></div>
<div class="r" style="left:21px;top:344.86px;width:564.00px;height:1.00px;background:#dedfe0;"></div>
<div class="r" style="left:1.5px;top:344.86px;width:19.50px;height:1.00px;background:#d0d0d0;"></div>
<div class="r" style="left:21px;top:360.39px;width:564.00px;height:1.00px;background:#dedfe0;"></div>
<div class="r" style="left:1.5px;top:360.39px;width:19.50px;height:1.00px;background:#d0d0d0;"></div>
<div class="r" style="left:21px;top:375.91999999999996px;width:564.00px;height:1.00px;background:#dedfe0;"></div>
<div class="r" style="left:1.5px;top:375.91999999999996px;width:19.50px;height:1.00px;background:#d0d0d0;"></div>
<div class="r" style="left:21px;top:391.45px;width:564.00px;height:1.00px;background:#dedfe0;"></div>
<div class="r" style="left:1.5px;top:391.45px;width:19.50px;height:1.00px;background:#d0d0d0;"></div>
<div class="r" style="left:21px;top:406.98px;width:564.00px;height:1.00px;background:#dedfe0;"></div>
<div class="r" style="left:1.5px;top:406.98px;width:19.50px;height:1.00px;background:#d0d0d0;"></div>
<div class="r" style="left:21px;top:422.51px;width:564.00px;height:1.00px;background:#dedfe0;"></div>
<div class="r" style="left:1.5px;top:422.51px;width:19.50px;height:1.00px;background:#d0d0d0;"></div>
<div class="r" style="left:98.2px;top:159.0px;width:1.00px;height:274.60px;background:#dedfe0;"></div>
<div class="r" style="left:98.2px;top:144.4px;width:1.00px;height:13.10px;background:#d0d0d0;"></div>
<div class="r" style="left:176.5px;top:159.0px;width:1.00px;height:274.60px;background:#dedfe0;"></div>
<div class="r" style="left:176.5px;top:144.4px;width:1.00px;height:13.10px;background:#d0d0d0;"></div>
<div class="r" style="left:225.9px;top:159.0px;width:1.00px;height:274.60px;background:#dedfe0;"></div>
<div class="r" style="left:225.9px;top:144.4px;width:1.00px;height:13.10px;background:#d0d0d0;"></div>
<div class="r" style="left:275.3px;top:159.0px;width:1.00px;height:274.60px;background:#dedfe0;"></div>
<div class="r" style="left:275.3px;top:144.4px;width:1.00px;height:13.10px;background:#d0d0d0;"></div>
<div class="r" style="left:324.7px;top:159.0px;width:1.00px;height:274.60px;background:#dedfe0;"></div>
<div class="r" style="left:324.7px;top:144.4px;width:1.00px;height:13.10px;background:#d0d0d0;"></div>
<div class="r" style="left:374.1px;top:159.0px;width:1.00px;height:274.60px;background:#dedfe0;"></div>
<div class="r" style="left:374.1px;top:144.4px;width:1.00px;height:13.10px;background:#d0d0d0;"></div>
<div class="r" style="left:423.5px;top:159.0px;width:1.00px;height:274.60px;background:#dedfe0;"></div>
<div class="r" style="left:423.5px;top:144.4px;width:1.00px;height:13.10px;background:#d0d0d0;"></div>
<div class="r" style="left:472.9px;top:159.0px;width:1.00px;height:274.60px;background:#dedfe0;"></div>
<div class="r" style="left:472.9px;top:144.4px;width:1.00px;height:13.10px;background:#d0d0d0;"></div>
<div class="r" style="left:522.3px;top:159.0px;width:1.00px;height:274.60px;background:#dedfe0;"></div>
<div class="r" style="left:522.3px;top:144.4px;width:1.00px;height:13.10px;background:#d0d0d0;"></div>
<div class="r" style="left:571.7px;top:159.0px;width:1.00px;height:274.60px;background:#dedfe0;"></div>
<div class="r" style="left:571.7px;top:144.4px;width:1.00px;height:13.10px;background:#d0d0d0;"></div>
<div class="r" style="left:20.5px;top:143.4px;width:1.00px;height:290.20px;background:#d0d0d0;"></div>
<div class="r" style="left:1.5px;top:158.5px;width:583.50px;height:1.00px;background:#d0d0d0;"></div>
<svg class="r" style="left:7px;top:146px" width="12" height="12" viewBox="0 0 12 12"><path d="M11 1 V11 H1z" fill="#c0c0c0"/></svg>
<div class="t" style="left:56.35px;top:146.51px;font-size:10.5px;color:#505050;">A</div>
<div class="t" style="left:134.35px;top:146.51px;font-size:10.5px;color:#217346;">B</div>
<div class="t" style="left:197.91px;top:146.51px;font-size:10.5px;color:#505050;">C</div>
<div class="t" style="left:247.31px;top:146.51px;font-size:10.5px;color:#505050;">D</div>
<div class="t" style="left:297.00px;top:146.51px;font-size:10.5px;color:#505050;">E</div>
<div class="t" style="left:346.69px;top:146.51px;font-size:10.5px;color:#505050;">F</div>
<div class="t" style="left:395.22px;top:146.51px;font-size:10.5px;color:#505050;">G</div>
<div class="t" style="left:444.91px;top:146.51px;font-size:10.5px;color:#505050;">H</div>
<div class="t" style="left:496.64px;top:146.51px;font-size:10.5px;color:#505050;">I</div>
<div class="t" style="left:544.88px;top:146.51px;font-size:10.5px;color:#505050;">J</div>
<div class="t" style="left:8.00px;top:162.26px;font-size:10.8px;color:#555;">1</div>
<div class="t" style="left:8.00px;top:177.79px;font-size:10.8px;color:#555;">2</div>
<div class="t" style="left:8.00px;top:193.32px;font-size:10.8px;color:#555;">3</div>
<div class="t" style="left:8.00px;top:208.85px;font-size:10.8px;color:#555;">4</div>
<div class="t" style="left:8.00px;top:224.38px;font-size:10.8px;color:#555;">5</div>
<div class="t" style="left:8.00px;top:239.91px;font-size:10.8px;color:#555;">6</div>
<div class="t" style="left:8.00px;top:255.44px;font-size:10.8px;color:#555;">7</div>
<div class="t" style="left:8.00px;top:270.97px;font-size:10.8px;color:#555;">8</div>
<div class="t" style="left:8.00px;top:286.50px;font-size:10.8px;color:#555;">9</div>
<div class="t" style="left:4.99px;top:302.03px;font-size:10.8px;color:#555;">10</div>
<div class="t" style="left:5.39px;top:317.56px;font-size:10.8px;color:#555;">11</div>
<div class="t" style="left:4.99px;top:333.09px;font-size:10.8px;color:#555;">12</div>
<div class="t" style="left:4.99px;top:348.62px;font-size:10.8px;color:#555;">13</div>
<div class="t" style="left:4.99px;top:364.15px;font-size:10.8px;color:#555;">14</div>
<div class="t" style="left:4.99px;top:379.68px;font-size:10.8px;color:#555;">15</div>
<div class="t" style="left:4.99px;top:395.21px;font-size:10.8px;color:#555;">16</div>
<div class="t" style="left:4.99px;top:410.74px;font-size:10.8px;color:#4f6f5f;">17</div>
<div class="t" style="left:4.99px;top:426.27px;font-size:10.8px;color:#555;">18</div>
<div class="r" style="left:21px;top:159.0px;width:156.00px;height:15.53px;background:#4472c4;"></div>
<div class="r" style="left:21px;top:190.06px;width:156.00px;height:15.53px;background:#70ad47;"></div>
<div class="t" style="left:75.20px;top:163.73px;font-size:10px;color:#fff;font-weight:bold;transform:scaleX(1.0302);">Expenses</div>
<div class="t" style="left:23.30px;top:194.79px;font-size:10px;color:#e2efda;transform:scaleX(1.0219);">Month</div>
<div class="t" style="left:101.20px;top:194.79px;font-size:10px;color:#e2efda;transform:scaleX(1.0040);">Amount</div>
<div class="t" style="left:22.80px;top:210.32px;font-size:10px;color:#333;transform:scaleX(0.9586);">January</div>
<div class="t" style="left:146.38px;top:210.32px;font-size:10px;color:#333;">6,126</div>
<div class="t" style="left:22.80px;top:225.85px;font-size:10px;color:#333;transform:scaleX(0.9797);">February</div>
<div class="t" style="left:146.38px;top:225.85px;font-size:10px;color:#333;">5,728</div>
<div class="t" style="left:22.80px;top:241.38px;font-size:10px;color:#333;transform:scaleX(1.0295);">March</div>
<div class="t" style="left:146.38px;top:241.38px;font-size:10px;color:#333;">6,218</div>
<div class="t" style="left:22.80px;top:256.91px;font-size:10px;color:#333;transform:scaleX(1.0198);">April</div>
<div class="t" style="left:146.38px;top:256.91px;font-size:10px;color:#333;">4,371</div>
<div class="t" style="left:22.80px;top:272.44px;font-size:10px;color:#333;transform:scaleX(1.0376);">May</div>
<div class="t" style="left:146.38px;top:272.44px;font-size:10px;color:#333;">1,435</div>
<div class="t" style="left:22.80px;top:287.97px;font-size:10px;color:#333;transform:scaleX(0.9039);">June</div>
<div class="t" style="left:146.38px;top:287.97px;font-size:10px;color:#333;">4,690</div>
<div class="t" style="left:22.80px;top:303.50px;font-size:10px;color:#333;transform:scaleX(0.9279);">July</div>
<div class="t" style="left:146.38px;top:303.50px;font-size:10px;color:#333;">8,057</div>
<div class="t" style="left:22.80px;top:319.03px;font-size:10px;color:#333;transform:scaleX(1.0022);">August</div>
<div class="t" style="left:146.38px;top:319.03px;font-size:10px;color:#333;">1,501</div>
<div class="t" style="left:22.80px;top:334.56px;font-size:10px;color:#333;transform:scaleX(0.9936);">September</div>
<div class="t" style="left:146.38px;top:334.56px;font-size:10px;color:#333;">5,677</div>
<div class="t" style="left:22.80px;top:350.09px;font-size:10px;color:#333;transform:scaleX(1.0206);">October</div>
<div class="t" style="left:146.38px;top:350.09px;font-size:10px;color:#333;">8,431</div>
<div class="t" style="left:22.80px;top:365.62px;font-size:10px;color:#333;transform:scaleX(1.0168);">November</div>
<div class="t" style="left:146.38px;top:365.62px;font-size:10px;color:#333;">5,451</div>
<div class="t" style="left:22.80px;top:381.15px;font-size:10px;color:#333;transform:scaleX(0.9973);">December</div>
<div class="t" style="left:146.38px;top:381.15px;font-size:10px;color:#333;">8,681</div>
<div class="t" style="left:22.80px;top:412.21px;font-size:10px;color:#111;font-weight:bold;transform:scaleX(1.0457);">Total</div>
<div class="t" style="left:141.20px;top:412.21px;font-size:10px;color:#111;font-weight:bold;transform:scaleX(0.9875);">66,366</div>
<div class="r" style="left:97.8px;top:406.38px;width:80.2px;height:17.83px;box-sizing:border-box;border:2px solid #217346;"></div>
<div class="r" style="left:175px;top:421.21px;width:4.40px;height:4.40px;background:#217346;border:0.6px solid #fff;box-sizing:border-box;"></div>
<div class="r" style="left:584.5px;top:143.4px;width:13.80px;height:290.20px;background:#e2e2e2;"></div>
<div class="r" style="left:584px;top:159.0px;width:1.00px;height:274.60px;background:#c6c6c6;"></div>
<div class="r" style="left:586.7px;top:145.7px;width:9.50px;height:10.50px;background:#fff;box-shadow: inset 0 0 0 1px #cfcfcf;"></div>
<svg class="r" style="left:589.2px;top:149.5px" width="5" height="3" viewBox="0 0 5 3"><path d="M0 3 L2.5 0 L5 3z" fill="#555"/></svg>
<div class="r" style="left:586.7px;top:157px;width:9.50px;height:224.60px;background:#fff;box-shadow: inset 0 0 0 1px #cfcfcf;"></div>
<div class="r" style="left:586.7px;top:424.2px;width:9.50px;height:7.80px;background:#fff;box-shadow: inset 0 0 0 1px #cfcfcf;"></div>
<svg class="r" style="left:589.2px;top:427px" width="5" height="3" viewBox="0 0 5 3"><path d="M0 0 L2.5 3 L5 0z" fill="#555"/></svg>
<div class="r" style="left:1.5px;top:433.6px;width:596.50px;height:18.90px;background:#e6e6e6;"></div>
<div class="r" style="left:1.5px;top:433.6px;width:596.50px;height:1.00px;background:#c8c8c8;"></div>
<div class="r" style="left:1.5px;top:451.8px;width:596.50px;height:0.80px;background:#d6d6d6;"></div>
<svg class="r" style="left:20px;top:440.5px" width="4" height="6" viewBox="0 0 4 6"><path d="M3.5 0 L0.5 3 L3.5 6z" fill="#c4c4c4"/></svg>
<svg class="r" style="left:40px;top:440.5px" width="4" height="6" viewBox="0 0 4 6"><path d="M0.5 0 L3.5 3 L0.5 6z" fill="#c4c4c4"/></svg>
<div class="r" style="left:72px;top:433.6px;width:56.00px;height:16.90px;background:#fff;"></div>
<div class="r" style="left:72px;top:449px;width:56.00px;height:1.80px;background:#217346;"></div>
<div class="t" style="left:80.00px;top:438.60px;font-size:8.5px;color:#217346;font-weight:bold;transform:scaleX(0.9877);">Expenses</div>
<div class="t" style="left:136.80px;top:438.60px;font-size:8.5px;color:#555;transform:scaleX(1.0225);">Grades</div>
<div class="r" style="left:173.7px;top:436px;width:0.80px;height:12.00px;background:#aaa;"></div>
<svg class="r" style="left:197px;top:437px" width="12" height="12" viewBox="0 0 12 12"><circle cx="6" cy="6" r="5" fill="none" stroke="#666" stroke-width="0.9"/><path d="M6 3 v6 M3 6 h6" stroke="#666" stroke-width="1"/></svg>
<svg class="r" style="left:360px;top:438px" width="3" height="11" viewBox="0 0 3 11"><g fill="#bbb"><rect x="1" y="1" width="1" height="1"/><rect x="1" y="4" width="1" height="1"/><rect x="1" y="7" width="1" height="1"/><rect x="1" y="10" width="1" height="1"/></g></svg>
<div class="r" style="left:371.7px;top:438px;width:10.80px;height:10.30px;background:#fff;box-shadow: inset 0 0 0 1px #c8c8c8;"></div>
<svg class="r" style="left:375.5px;top:441px" width="3" height="5" viewBox="0 0 3 5"><path d="M3 0 L0 2.5 L3 5z" fill="#666"/></svg>
<div class="r" style="left:382.5px;top:438px;width:169.50px;height:10.30px;background:#fff;box-shadow: inset 0 0 0 1px #c8c8c8;"></div>
<div class="r" style="left:552px;top:438px;width:22.00px;height:10.30px;background:#dcdcdc;"></div>
<div class="r" style="left:574px;top:438px;width:10.00px;height:10.30px;background:#fff;box-shadow: inset 0 0 0 1px #c8c8c8;"></div>
<svg class="r" style="left:578px;top:441px" width="3" height="5" viewBox="0 0 3 5"><path d="M0 0 L3 2.5 L0 5z" fill="#666"/></svg>
<div class="r" style="left:1.5px;top:452.6px;width:596.50px;height:14.90px;background:#f0f0f0;"></div>
<div class="r" style="left:0px;top:467.5px;width:600.00px;height:1.50px;background:#217346;"></div>
<div class="t" style="left:6.00px;top:456.80px;font-size:7.8px;color:#555;transform:scaleX(0.9536);">Ready</div>
<div class="r" style="left:385.4px;top:452.5px;width:26.30px;height:15.00px;background:#d4d4d4;"></div>
<svg class="r" style="left:393.5px;top:455px" width="10" height="10" viewBox="0 0 10 10"><g fill="none" stroke="#555" stroke-width="0.8"><rect x="0.5" y="0.5" width="9" height="9"/><path d="M3.5 0.5 v9 M6.5 0.5 v9 M0.5 3.5 h9 M0.5 6.5 h9"/></g></svg>
<svg class="r" style="left:420.5px;top:455px" width="10" height="10" viewBox="0 0 10 10"><g fill="none" stroke="#555" stroke-width="0.8"><rect x="0.5" y="0.5" width="9" height="9"/><rect x="2.5" y="2.5" width="5" height="5"/></g></svg>
<svg class="r" style="left:447px;top:455px" width="10" height="10" viewBox="0 0 10 10"><g fill="none" stroke="#555" stroke-width="0.8"><path d="M0.5 9.5 V0.5 H9.5 V9.5"/><path d="M3.5 0.5 V5.5 H6.5 V0.5"/></g></svg>
<div class="r" style="left:470px;top:459.8px;width:4.00px;height:1.00px;background:#555;"></div>
<div class="r" style="left:477px;top:460px;width:72.00px;height:0.80px;background:#aaa;"></div>
<div class="r" style="left:512.3px;top:456px;width:2.50px;height:9.00px;background:#444;"></div>
<div class="r" style="left:550px;top:459.8px;width:6.00px;height:1.00px;background:#555;"></div>
<div class="r" style="left:552.5px;top:457.3px;width:1.00px;height:6.00px;background:#555;"></div>
<div class="t" style="left:565.80px;top:455.97px;font-size:8.3px;color:#444;transform:scaleX(0.9509);">110%</div>
</div></body></html>
